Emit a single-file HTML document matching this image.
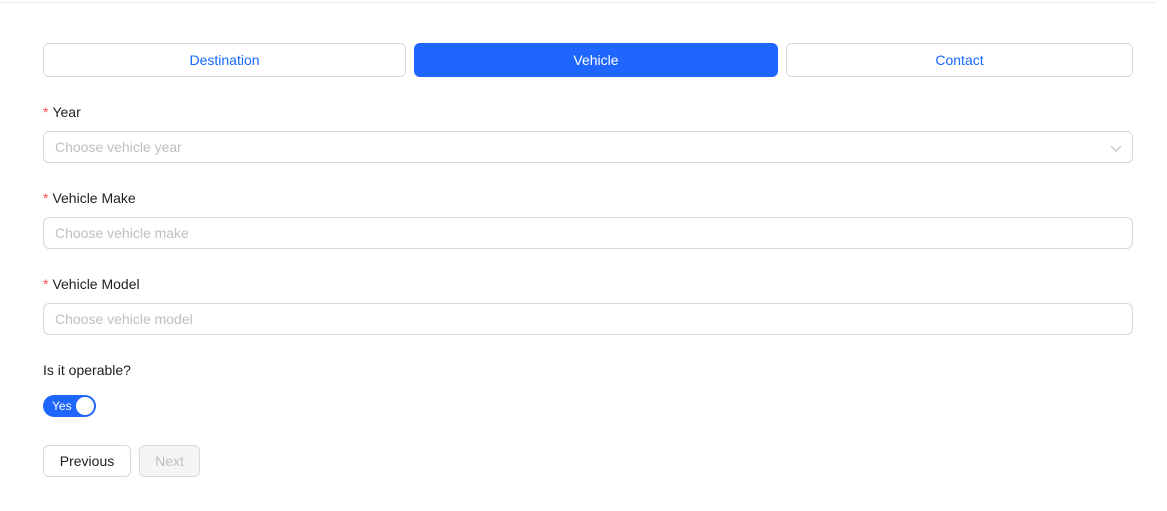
<!DOCTYPE html>
<html><head><style>
*{box-sizing:border-box;margin:0;padding:0}
body{width:1167px;height:511px;background:#fff;font-family:"Liberation Sans",sans-serif;font-size:14px;color:#1f1f1f;position:relative;overflow:hidden}
.a{position:absolute}
.tab{position:absolute;top:43px;height:34px;border:1px solid #d9d9d9;border-radius:6px;color:#1668ff;display:flex;align-items:center;justify-content:center;font-size:14px}
.in{position:absolute;left:43px;width:1090px;height:32px;border:1px solid #d9d9d9;border-radius:6px;color:#bfbfbf;padding-left:11px;line-height:30px}
.lb{position:absolute;left:43px;line-height:20px}
.lb b{color:#ff4d4f;font-weight:normal;margin-right:4px}
.btn{position:absolute;top:445px;height:32px;border:1px solid #d9d9d9;border-radius:6px;display:flex;align-items:center;justify-content:center}
</style></head><body>
<div class="a" style="left:0;top:2px;width:1156px;height:1px;background:#ececec"></div>
<div class="tab" style="left:43px;width:363px">Destination</div>
<div class="tab" style="left:414px;width:364px;background:#1f66ff;border-color:#1f66ff;color:#fff">Vehicle</div>
<div class="tab" style="left:786px;width:347px">Contact</div>
<div class="lb" style="top:102px"><b>*</b>Year</div>
<div class="in" style="top:131px">Choose vehicle year
<svg class="a" style="right:10px;top:10px" width="12" height="12" viewBox="0 0 12 12"><path d="M1 4l5 5 5-5" fill="none" stroke="#bfbfbf" stroke-width="1.2"/></svg></div>
<div class="lb" style="top:188px"><b>*</b>Vehicle Make</div>
<div class="in" style="top:217px">Choose vehicle make</div>
<div class="lb" style="top:274px"><b>*</b>Vehicle Model</div>
<div class="in" style="top:303px">Choose vehicle model</div>
<div class="lb" style="top:360px">Is it operable?</div>
<div class="a" style="left:43px;top:395px;width:53px;height:22px;border-radius:11px;background:#1f66ff;color:#fff;font-size:12px;line-height:22px;padding-left:9px">Yes
<div class="a" style="right:2px;top:2px;width:18px;height:18px;border-radius:9px;background:#fff"></div></div>
<div class="btn" style="left:43px;width:88px">Previous</div>
<div class="btn" style="left:139px;width:61px;background:#f5f5f5;color:#bfbfbf">Next</div>
</body></html>
